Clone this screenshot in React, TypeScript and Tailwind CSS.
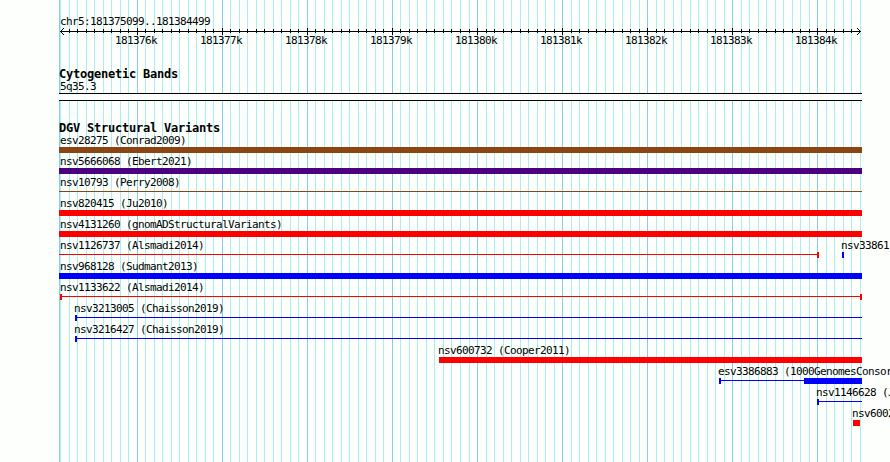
const LEFT = 60;
const STEP = 800 / 94;
const MINOR = Array.from({ length: 95 }, (_, i) => ({
  x: Math.round(LEFT + i * STEP),
  major: i % 10 === 9,
}));
const KB = ["181376k", "181377k", "181378k", "181379k", "181380k", "181381k", "181382k", "181383k", "181384k"];

type Kind = "bar" | "line" | "capL" | "capR" | "capBoth" | "mixed";
type Feature = { name: string; start: number; end: number; kind: Kind; color: string };

const ROWS: Feature[][] = [
  [{ name: "esv28275 (Conrad2009)", start: 59, end: 862, kind: "bar", color: "bg-[#8b4513]" }],
  [{ name: "nsv5666068 (Ebert2021)", start: 59, end: 862, kind: "bar", color: "bg-[#4b0082]" }],
  [{ name: "nsv10793 (Perry2008)", start: 59, end: 862, kind: "line", color: "bg-[#8b4513]" }],
  [{ name: "nsv820415 (Ju2010)", start: 59, end: 862, kind: "bar", color: "bg-[#ff0000]" }],
  [{ name: "nsv4131260 (gnomADStructuralVariants)", start: 59, end: 862, kind: "bar", color: "bg-[#ff0000]" }],
  [
    { name: "nsv1126737 (Alsmadi2014)", start: 59, end: 819, kind: "capR", color: "bg-[#ff0000]" },
    { name: "nsv33861", start: 842, end: 844, kind: "bar", color: "bg-[#0000ff]" },
  ],
  [{ name: "nsv968128 (Sudmant2013)", start: 59, end: 862, kind: "bar", color: "bg-[#0000ff]" }],
  [{ name: "nsv1133622 (Alsmadi2014)", start: 60, end: 862, kind: "capBoth", color: "bg-[#ff0000]" }],
  [{ name: "nsv3213005 (Chaisson2019)", start: 75, end: 862, kind: "capL", color: "bg-[#0000ff]" }],
  [{ name: "nsv3216427 (Chaisson2019)", start: 75, end: 862, kind: "capL", color: "bg-[#0000ff]" }],
  [{ name: "nsv600732 (Cooper2011)", start: 439, end: 862, kind: "bar", color: "bg-[#ff0000]" }],
  [{ name: "esv3386883 (1000GenomesConsor", start: 719, end: 862, kind: "mixed", color: "bg-[#0000ff]" }],
  [{ name: "nsv1146628 (J", start: 817, end: 862, kind: "capL", color: "bg-[#0000ff]" }],
  [{ name: "nsv6002", start: 853, end: 860, kind: "bar", color: "bg-[#ff0000]" }],
];

const SMALL = "block whitespace-pre font-['DejaVu_Sans_Mono',monospace] text-[11px] leading-[13px] tracking-[-0.622px]";
const TITLE = "block whitespace-pre pl-[59px] font-['DejaVu_Sans_Mono',monospace] text-[12px] font-bold leading-[13px] tracking-[-0.224px]";

function Grid() {
  return (
    <svg className="absolute inset-0" width="890" height="462" shapeRendering="crispEdges" aria-hidden="true">
      {MINOR.map(({ x, major }) => (
        <rect key={x} x={x} y="0" width="1" height="462" fill={major ? "#87ceeb" : "#afeeee"} />
      ))}
      <rect x="59" y="0" width="1" height="462" fill="#87ceeb" />
    </svg>
  );
}

function Ruler() {
  return (
    <svg className="block" width="890" height="7" shapeRendering="crispEdges" aria-hidden="true">
      <rect x="60" y="3" width="801" height="1" />
      {MINOR.slice(1, -1).map(({ x, major }) => (
        <rect key={x} x={x} y={major ? 0 : 1} width="1" height={major ? 7 : 4} />
      ))}
      {[1, 2, 3].map((d) => (
        <g key={d}>
          <rect x={60 + d} y={3 - d} width="1" height="1" />
          <rect x={60 + d} y={3 + d} width="1" height="1" />
          <rect x={860 - d} y={3 - d} width="1" height="1" />
          <rect x={860 - d} y={3 + d} width="1" height="1" />
        </g>
      ))}
    </svg>
  );
}

function Glyph({ kind, color }: { kind: Kind; color: string }) {
  if (kind === "bar") return <div className={`h-1.5 w-full ${color}`} />;
  return (
    <div className="flex h-1.5 w-full">
      {(kind === "capL" || kind === "capBoth" || kind === "mixed") && <div className={`h-1.5 w-0.5 ${color}`} />}
      <div className={`mt-0.5 h-px flex-1 ${color}`} />
      {(kind === "capR" || kind === "capBoth") && <div className={`h-1.5 w-0.5 ${color}`} />}
      {kind === "mixed" && <div className={`h-1.5 w-[58px] ${color}`} />}
    </div>
  );
}

function FeatureRow({ items }: { items: Feature[] }) {
  return (
    <div className="grid h-[21px] grid-cols-1">
      {items.map((f) => (
        <div key={f.name} className="col-start-1 row-start-1">
          <span className={SMALL} style={{ paddingLeft: Math.max(60, f.start - 1) }}>{f.name}</span>
          <div style={{ marginLeft: f.start, width: f.end - f.start }}>
            <Glyph kind={f.kind} color={f.color} />
          </div>
        </div>
      ))}
    </div>
  );
}

export default function App() {
  return (
    <div className="relative h-[462px] w-[890px] overflow-hidden bg-[#fdfffc] text-black">
      <Grid />
      <div className="relative flex flex-col">
        <div className="h-7 pt-[15px]">
          <span className={`${SMALL} pl-[60px]`}>chr5:181375099..181384499</span>
        </div>
        <Ruler />
        <div className="flex h-[33px] gap-[43px] pl-[115px] -mt-px">
          {KB.map((k) => (
            <span key={k} className={`${SMALL} w-[42px]`}>{k}</span>
          ))}
        </div>
        <div className="h-[26px] pt-px">
          <span className={TITLE}>Cytogenetic Bands</span>
          <span className={`${SMALL} -mt-px pl-[60px]`}>5q35.3</span>
        </div>
        <div className="ml-[59px] h-2 w-[803px] border-y border-black bg-[#fdfffc]" />
        <div className="h-[33px] pt-[21px]">
          <span className={TITLE}>DGV Structural Variants</span>
        </div>
        {ROWS.map((items) => (
          <FeatureRow key={items[0].name} items={items} />
        ))}
      </div>
    </div>
  );
}
